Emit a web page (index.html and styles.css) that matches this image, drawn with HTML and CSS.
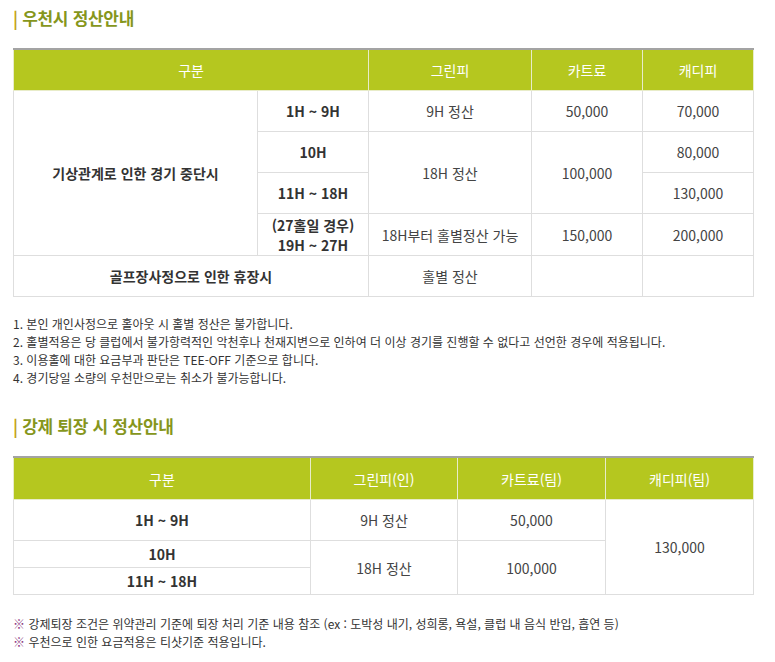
FILE: index.html
```html
<!DOCTYPE html>
<html lang="ko">
<head>
<meta charset="utf-8">
<title>정산안내</title>
<link rel="stylesheet" href="styles.css">
</head>
<body>
<div class="page">
  <h2 class="title"><span class="bar">|</span> 우천시 정산안내</h2>
  <table class="fee-table t1">
    <colgroup>
      <col class="c1a"><col class="c1b"><col class="c1c"><col class="c1d"><col class="c1e">
    </colgroup>
    <thead>
      <tr><th colspan="2">구분</th><th>그린피</th><th>카트료</th><th>캐디피</th></tr>
    </thead>
    <tbody>
      <tr><td rowspan="4" class="strong">기상관계로 인한 경기 중단시</td><td class="strong">1H ~ 9H</td><td>9H 정산</td><td>50,000</td><td>70,000</td></tr>
      <tr><td class="strong">10H</td><td rowspan="2">18H 정산</td><td rowspan="2">100,000</td><td>80,000</td></tr>
      <tr><td class="strong">11H ~ 18H</td><td>130,000</td></tr>
      <tr class="tall"><td class="strong">(27홀일 경우)<br>19H ~ 27H</td><td>18H부터 홀별정산 가능</td><td>150,000</td><td>200,000</td></tr>
      <tr><td colspan="2" class="strong">골프장사정으로 인한 휴장시</td><td>홀별 정산</td><td></td><td></td></tr>
    </tbody>
  </table>
  <ol class="notes">
    <li>1. 본인 개인사정으로 홀아웃 시 홀별 정산은 불가합니다.</li>
    <li>2. 홀별적용은 당 클럽에서 불가항력적인 악천후나 천재지변으로 인하여 더 이상 경기를 진행할 수 없다고 선언한 경우에 적용됩니다.</li>
    <li>3. 이용홀에 대한 요금부과 판단은 TEE-OFF 기준으로 합니다.</li>
    <li>4. 경기당일 소량의 우천만으로는 취소가 불가능합니다.</li>
  </ol>

  <h2 class="title second"><span class="bar">|</span> 강제 퇴장 시 정산안내</h2>
  <table class="fee-table t2">
    <colgroup>
      <col class="c2a"><col class="c2b"><col class="c2c"><col class="c2d">
    </colgroup>
    <thead>
      <tr><th>구분</th><th>그린피(인)</th><th>카트료(팀)</th><th>캐디피(팀)</th></tr>
    </thead>
    <tbody>
      <tr><td class="strong">1H ~ 9H</td><td>9H 정산</td><td>50,000</td><td rowspan="3">130,000</td></tr>
      <tr class="short"><td class="strong">10H</td><td rowspan="2">18H 정산</td><td rowspan="2">100,000</td></tr>
      <tr class="short"><td class="strong">11H ~ 18H</td></tr>
    </tbody>
  </table>
  <ul class="remarks">
    <li><span class="mark">※</span> 강제퇴장 조건은 위약관리 기준에 퇴장 처리 기준 내용 참조 (ex : 도박성 내기, 성희롱, 욕설, 클럽 내 음식 반입, 흡연 등)</li>
    <li><span class="mark">※</span> 우천으로 인한 요금적용은 티샷기준 적용입니다.</li>
  </ul>
</div>
</body>
</html>
```

FILE: styles.css
```css
html, body {
  margin: 0;
  padding: 0;
  background: #fff;
}
body {
  font-family: "Noto Sans CJK KR", "Noto Sans", sans-serif;
  color: #3d3d3d;
}
.page {
  width: 740px;
  padding: 7px 0 0 13px;
}
.title {
  margin: 0;
  font-size: 17px;
  line-height: 22px;
  font-weight: 700;
  color: #86961c;
  letter-spacing: -0.3px;
}
.title .bar {
  color: #c3a314;
}
.title.second {
  margin-top: 28px;
}
.fee-table {
  width: 740px;
  border-collapse: collapse;
  table-layout: fixed;
  border-top: 2px solid #a3a3a3;
  margin-top: 19px;
  font-size: 14px;
}
.c1a { width: 244px; }
.c1b { width: 111px; }
.c1c { width: 163px; }
.c1d { width: 111px; }
.c1e { width: 111px; }
.c2a { width: 297px; }
.c2b { width: 147px; }
.c2c { width: 148px; }
.c2d { width: 148px; }
.fee-table th {
  background: #b5c71f;
  color: #fff;
  font-weight: 400;
  height: 40px;
  padding: 0;
  border: 1px solid #e8ecc9;
  border-top: none;
  text-align: center;
  vertical-align: middle;
}
.fee-table td {
  height: 40px;
  padding: 0;
  border: 1px solid #dedede;
  text-align: center;
  vertical-align: middle;
  line-height: 18px;
  color: #444;
}
.fee-table td.strong {
  font-weight: 700;
  color: #333;
}
.fee-table tr.tall td {
  height: 41px;
  line-height: 20px;
}
.t2 th {
  height: 41px;
}
.fee-table tr.short td {
  height: 26px;
}
.notes, .remarks {
  list-style: none;
  margin: 0;
  padding: 0;
  font-size: 12px;
  color: #333;
}
.notes {
  margin-top: 18px;
  line-height: 18px;
}
.remarks {
  margin-top: 20px;
  line-height: 18px;
}
.remarks .mark {
  color: #8e3a82;
}
```
